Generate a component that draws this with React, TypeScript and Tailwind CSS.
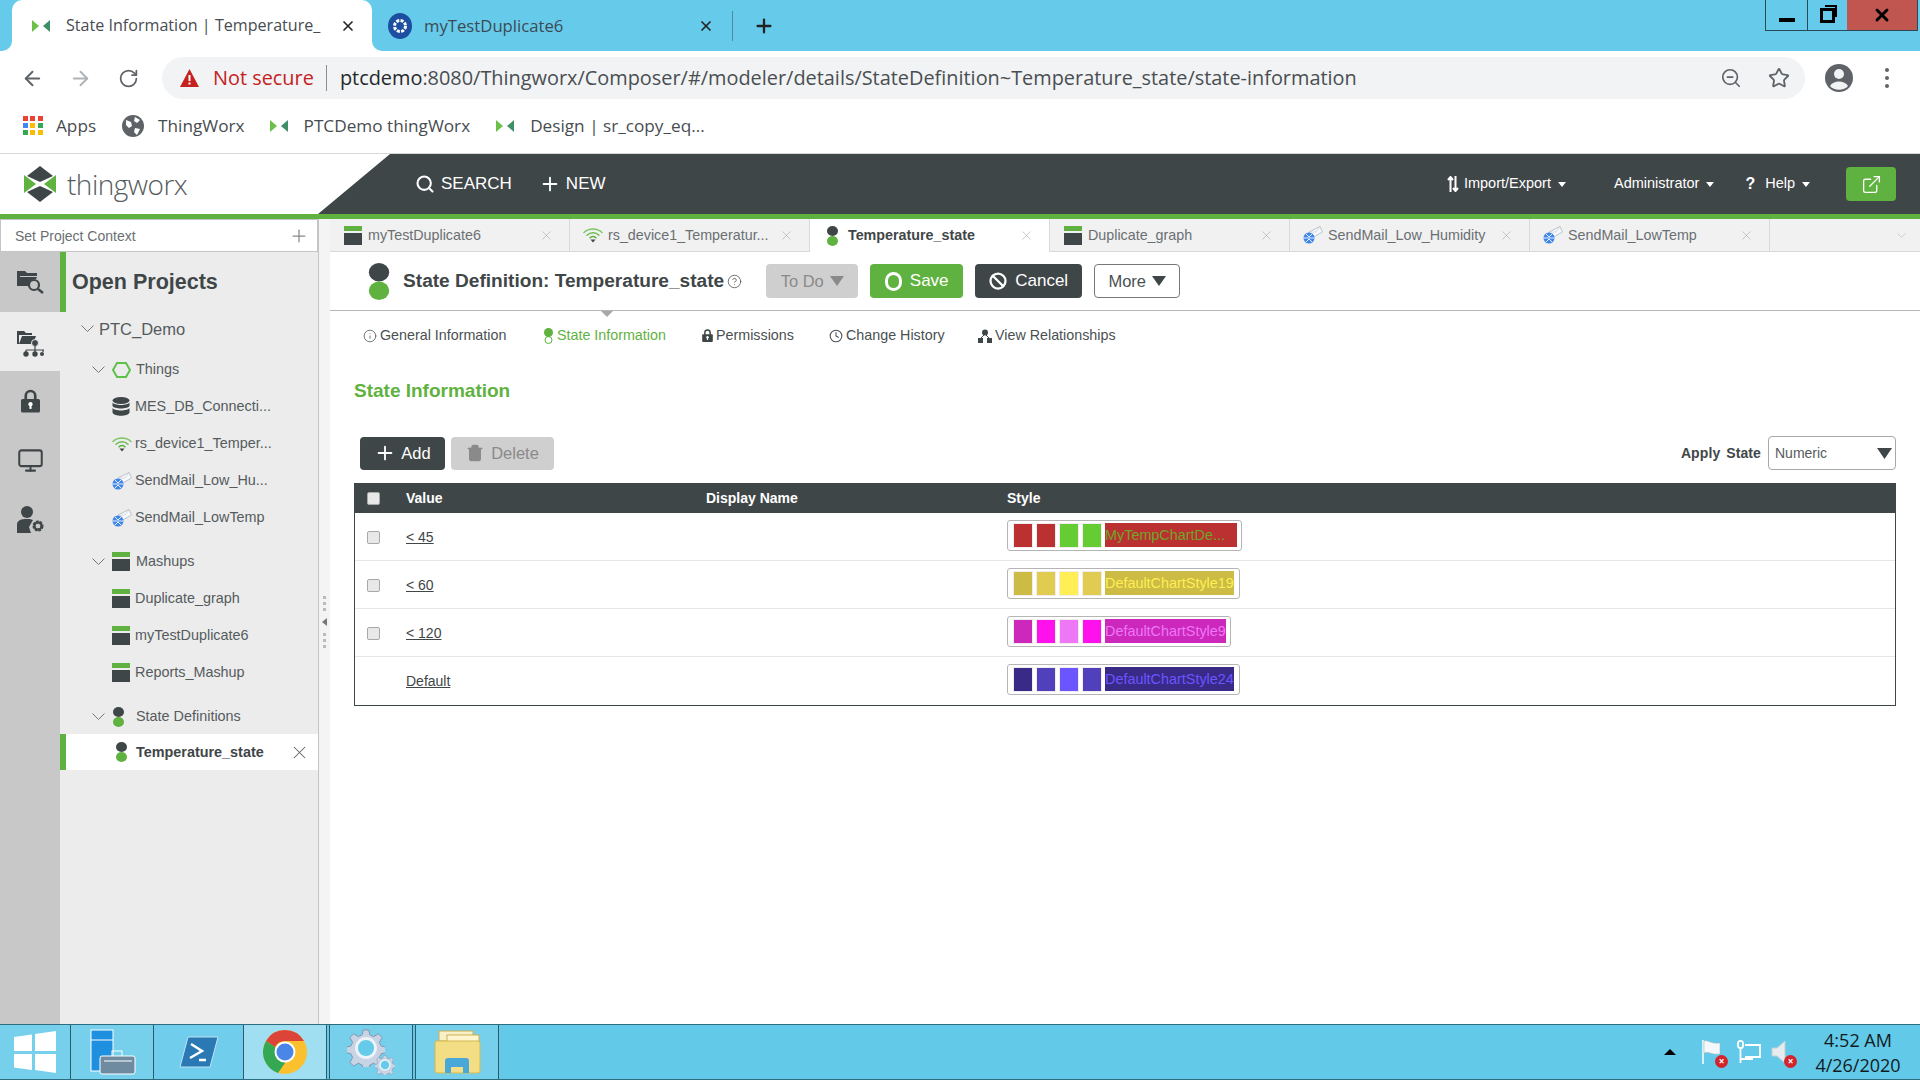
import { type FC, type ReactNode } from 'react';
import { ArrowLeft, ArrowRight, RotateCw, ZoomOut, Star, Search, Plus, Monitor, Info, Clock, Ban, Trash2, ExternalLink, X, ChevronDown, CircleHelp } from 'lucide-react';

const TwxTabIcon: FC = () => (
  <svg width="20" height="14" viewBox="0 0 20 14" className="shrink-0">
    <polygon points="1,1 8,7 1,13" fill="#6cc04a" />
    <polygon points="19,1 12,7 19,13" fill="#3f8f6a" />
  </svg>
);

const MashupIcon: FC<{ w?: number }> = ({ w = 18 }) => (
  <svg width={w} height="19" viewBox="0 0 18 19" preserveAspectRatio="none" className="shrink-0">
    <rect width="18" height="5" fill="#5fb23f" />
    <rect y="7" width="18" height="12" fill="#3f4648" />
  </svg>
);

const StateIcon: FC<{ size?: number }> = ({ size = 20 }) => (
  <svg width={size * 0.65} height={size} viewBox="0 0 13 20" className="shrink-0">
    <ellipse cx="6.500" cy="5" rx="5.500" ry="5" fill="#3f4648" />
    <ellipse cx="6.500" cy="15" rx="5.500" ry="5" fill="#5fb23f" />
  </svg>
);

const WifiIcon: FC = () => (
  <svg width="20" height="16" viewBox="0 0 20 16" fill="none" strokeLinecap="round" className="shrink-0">
    <path d="M1 5.500C6 .8 14 .8 19 5.500" stroke="#7cc763" strokeWidth="1.500" />
    <path d="M4 8.200C7.500 5 12.500 5 16 8.200" stroke="#6cbd50" strokeWidth="1.500" />
    <path d="M7 10.800C8.700 9.400 11.300 9.400 13 10.800" stroke="#5fb23f" strokeWidth="1.500" />
    <path d="M7.500 12.500h5L10 15.500z" fill="#3f4648" />
  </svg>
);

const SoapIcon: FC = () => (
  <svg width="20" height="18" viewBox="0 0 20 18" className="shrink-0">
    <polygon points="6,6 17,0.500 19.500,6 9,12" fill="#f6f8fb" stroke="#aeb6c2" strokeWidth="0.800" />
    <path d="M6.500 6.200L13 6l4-5.300" stroke="#c2c9d3" strokeWidth="0.600" fill="none" />
    <circle cx="6" cy="12" r="5.500" fill="#3f86e6" />
    <path d="M.5 12h11M3 8l3 3 3-3M3 16l3-3 3 3" stroke="#e4f0ff" strokeWidth="1" fill="none" />
  </svg>
);

const DbIcon: FC = () => (
  <svg width="18" height="20" viewBox="0 0 18 20" className="shrink-0">
    <ellipse cx="9" cy="3.500" rx="8.500" ry="3.500" fill="#3f4648" />
    <path d="M.5 5.500C2 8.800 16 8.800 17.500 5.500V9C16 12.300 2 12.300.5 9z" fill="#3f4648" />
    <path d="M.5 11C2 14.300 16 14.300 17.500 11v4.500C16 19.800 2 19.800.5 15.500z" fill="#3f4648" />
  </svg>
);

const HexIcon: FC = () => (
  <svg width="19" height="16" viewBox="0 0 19 16" fill="none" className="shrink-0">
    <polygon points="5,1 14,1 18,8 14,15 5,15 1,8" stroke="#5fc04a" strokeWidth="2" />
  </svg>
);

const PadLock: FC<{ w: number; h: number }> = ({ w, h }) => (
  <svg width={w} height={h} viewBox="0 0 18 22" className="shrink-0">
    <path d="M4.500 10V6a4.500 4.500 0 0 1 9 0v4" fill="none" stroke="#3f4648" strokeWidth="2.500" />
    <rect y="9" width="18" height="13" rx="1.500" fill="#3f4648" />
    <circle cx="9" cy="14" r="2" fill="#fff" />
    <rect x="8" y="14" width="2" height="4.500" fill="#fff" />
  </svg>
);

const Chevron: FC = () => (
  <svg width="13" height="8" viewBox="0 0 13 8" fill="none" stroke="#777" strokeWidth="1" className="shrink-0">
    <path d="M.5 .5l6 6 6-6" />
  </svg>
);

const Caret: FC<{ w?: number; h?: number; color?: string }> = ({ w = 13, h = 9, color = '#3f4648' }) => (
  <svg width={w} height={h} viewBox="0 0 13 9" preserveAspectRatio="none" className="shrink-0">
    <polygon points="0,0 13,0 6.500,9" fill={color} />
  </svg>
);

const TreeRow: FC<{ indent: string; icon: ReactNode; label: string; chevron?: boolean }> = ({ indent, icon, label, chevron }) => (
  <div className={`h-[37px] flex items-center text-[14.400px] text-[#555b5d] ${indent}`}>
    {chevron && <span className="w-[20px] shrink-0"><Chevron /></span>}
    <span className={`${chevron ? 'w-[24px]' : 'w-[23px]'} shrink-0 flex items-center`}>{icon}</span>
    <span className="whitespace-nowrap">{label}</span>
  </div>
);

const AppTab: FC<{ icon: ReactNode; label: string; active?: boolean }> = ({ icon, label, active }) => (
  <div className={`w-[240px] flex items-center pl-[13px] pr-[15px] gap-[6px] text-[14.300px] border-r border-[#d9d9d9] ${active ? 'bg-white font-bold text-[#3f4648]' : 'bg-[#f1f1f1] text-[#6a6f71] border-b'}`}>
    <span className="flex justify-center w-[19px]">{icon}</span>
    <span className="flex-1 whitespace-nowrap pt-[1px]">{label}</span>
    <X size={15} strokeWidth={1} color="#aaa" />
  </div>
);

const SubTab: FC<{ icon: ReactNode; label: string; active?: boolean; width: string }> = ({ icon, label, active, width }) => (
  <div className={`flex items-center gap-[3px] text-[14.300px] ${width} ${active ? 'text-[#5fb23f]' : 'text-[#4a5052]'}`}>
    {icon}
    <span className="whitespace-nowrap">{label}</span>
  </div>
);

const StyleCell: FC<{ swatches: string[]; label: string; bg: string; fg: string; w: string; labelW: string }> = ({ swatches, label, bg, fg, w, labelW }) => (
  <div className={`h-[31px] mb-[3px] border border-[#b5b5b5] rounded-[3px] bg-white flex items-center pl-[5px] ${w}`}>
    {swatches.map((c, i) => (
      <span key={i} className="w-[20px] h-[25px] flex items-center justify-center mr-[3px] border border-[#f3ecec]">
        <span className="block w-[18px] h-[23px]" style={{ backgroundColor: c }} />
      </span>
    ))}
    <span className={`h-[24px] text-[14.400px] leading-[24px] whitespace-nowrap ${labelW}`} style={{ backgroundColor: bg, color: fg }}>{label}</span>
  </div>
);

const rows = [
  { value: '< 45', check: true, cell: <StyleCell w="w-[235px]" labelW="w-[132px]" swatches={['#bb3030', '#bb3030', '#66cc33', '#66cc33']} label="MyTempChartDe..." bg="#bb3030" fg="#6ea62a" /> },
  { value: '< 60', check: true, cell: <StyleCell w="w-[233px]" labelW="w-[129px]" swatches={['#ccbb44', '#e0cc50', '#ffee55', '#e0cc50']} label="DefaultChartStyle19" bg="#ccbb44" fg="#ffee55" /> },
  { value: '< 120', check: true, cell: <StyleCell w="w-[224px]" labelW="w-[121px]" swatches={['#cc28bb', '#ff11ee', '#ee77f5', '#ff11ee']} label="DefaultChartStyle9" bg="#cc28bb" fg="#ee77f5" /> },
  { value: 'Default', check: false, cell: <StyleCell w="w-[233px]" labelW="w-[129px]" swatches={['#3a2a88', '#5040bb', '#6a55ff', '#5040bb']} label="DefaultChartStyle24" bg="#3a2a88" fg="#6a55ff" /> },
];

const Checkbox: FC = () => (
  <span className="block w-[13px] h-[13px] rounded-[2px] bg-[#e8e8e8] border border-[#a8a8a8]" />
);

const ChromeIcon: FC = () => (
  <svg width="44" height="44" viewBox="0 0 44 44">
    <circle cx="22" cy="22" r="22" fill="#fbc02d" />
    <path d="M22 0A22 22 0 0 1 41 11H22A11 11 0 0 0 12 17L3 11A22 22 0 0 1 22 0z" fill="#db4437" />
    <path d="M3 11L12 17 22 33 15 43A22 22 0 0 1 3 11z" fill="#34a853" />
    <circle cx="22" cy="22" r="10.500" fill="#fff" />
    <circle cx="22" cy="22" r="8.500" fill="#4a86e8" />
  </svg>
);

const TrayBadge: FC = () => (
  <span className="absolute -right-[4px] -bottom-[4px] w-[13px] h-[13px] rounded-full bg-[#d4242b] text-white text-[10px] font-bold leading-[13px] text-center">×</span>
);

const Gear: FC<{ size: number; className?: string }> = ({ size, className }) => (
  <svg width={size} height={size} viewBox="0 0 40 40" className={className}>
    <path d="M17 1h6l1 5 4 2 5-3 4 4-3 5 2 4 5 1v6l-5 1-2 4 3 5-4 4-5-3-4 2-1 5h-6l-1-5-4-2-5 3-4-4 3-5-2-4-5-1v-6l5-1 2-4-3-5 4-4 5 3 4-2z" fill="#c8d4e4" stroke="#7f93ad" strokeWidth="1" />
    <circle cx="20" cy="20" r="10" fill="#66cbea" stroke="#eef3f8" strokeWidth="3" />
  </svg>
);

export default function App() {
  return (
    <div className="w-[1920px] h-[1080px] flex flex-col overflow-hidden bg-white font-['Liberation_Sans',Arial,sans-serif]">
      {/* browser tab strip */}
      <div className="h-[51px] shrink-0 flex bg-[#66cbea] font-['Open_Sans',sans-serif] relative">
        <div className="w-[12px] bg-white"><div className="h-full bg-[#66cbea] rounded-br-[10px]" /></div>
        <div className="w-[360px] bg-white rounded-t-[10px] flex items-center pl-[19px] pr-[16px] text-[16.100px] text-[#474c50]">
          <TwxTabIcon />
          <span className="ml-[15px] whitespace-nowrap">State Information | Temperature_</span>
          <div className="flex-1" />
          <X size={16} strokeWidth={2.500} color="#222" className="shrink-0" />
        </div>
        <div className="w-[358px] bg-white"><div className="h-full bg-[#66cbea] rounded-bl-[10px] flex items-center pl-[16px] pr-[16px] text-[16.700px] text-[#3d4a55]">
          <svg width="24" height="26" viewBox="0 0 24 26" className="shrink-0">
            <ellipse cx="12" cy="13" rx="12" ry="13" fill="#1d4fa0" />
            <circle cx="12" cy="13" r="5.500" fill="none" stroke="#fff" strokeWidth="3" strokeDasharray="3 1.300" />
          </svg>
          <span className="ml-[12px] flex-1 whitespace-nowrap">myTestDuplicate6</span>
          <X size={16} strokeWidth={2.500} color="#222" />
        </div></div>
        <div className="w-px h-[30px] bg-[#4f8aa0] self-center ml-[2px]" />
        <Plus size={22} strokeWidth={2.500} color="#222" className="self-center ml-[20px]" />
        <div className="flex-1" />
        <div className="h-[31px] flex border border-t-0 border-[#2a4a58] self-start mr-[2px]">
          <div className="w-[42px] border-r border-[#2a4a58] flex items-end justify-center pb-[8px]"><span className="block w-[16px] h-[4px] bg-black" /></div>
          <div className="w-[39px] flex items-center justify-center">
            <span className="relative block w-[15px] h-[15px] border-[3px] border-black"><span className="absolute -top-[6px] left-[2px] w-[12px] h-[12px] border-t-[2px] border-r-[2px] border-black" /></span>
          </div>
          <div className="w-[70px] bg-[#c0564f] flex items-center justify-center"><X size={20} strokeWidth={3.500} color="#000" /></div>
        </div>
      </div>

      {/* browser toolbar */}
      <div className="h-[54px] shrink-0 flex items-center font-['Open_Sans',sans-serif]">
        <ArrowLeft size={23} strokeWidth={2} color="#5f6368" className="ml-[21px]" />
        <ArrowRight size={23} strokeWidth={2} color="#b0b3b6" className="ml-[25px]" />
        <RotateCw size={21} strokeWidth={2} color="#5f6368" className="ml-[26px]" />
        <div className="ml-[23px] w-[1643px] h-[42px] rounded-full bg-[#f1f3f4] flex items-center pl-[18px] pr-[15px] text-[19.900px] text-[#4a4e52]">
          <svg width="19" height="18" viewBox="0 0 19 18" className="shrink-0"><polygon points="9.500,0 19,18 0,18" fill="#c5221f" /><rect x="8.500" y="6" width="2" height="6" fill="#fff" /><rect x="8.500" y="13.500" width="2" height="2" fill="#fff" /></svg>
          <span className="ml-[14px] text-[#c5221f]">Not secure</span>
          <span className="w-px h-[26px] bg-[#8a8d90] ml-[12px] mr-[13px]" />
          <span className="flex-1 whitespace-nowrap"><span className="text-[#26292c]">ptcdemo</span>:8080/Thingworx/Composer/#/modeler/details/StateDefinition~Temperature_state/state-information</span>
          <ZoomOut size={22} strokeWidth={1.800} color="#5f6368" className="mr-[26px]" />
          <Star size={22} strokeWidth={2} color="#5f6368" />
        </div>
        <svg width="30" height="30" viewBox="0 0 30 30" className="ml-[19px]"><circle cx="15" cy="15" r="14" fill="#5f6368" /><circle cx="15" cy="11" r="5" fill="#f1f3f4" /><path d="M6 23c3-6 15-6 18 0-4 5-14 5-18 0z" fill="#f1f3f4" /></svg>
        <div className="ml-[31px] flex flex-col gap-[4px]">
          <span className="block w-[4px] h-[4px] rounded-full bg-[#5f6368]" />
          <span className="block w-[4px] h-[4px] rounded-full bg-[#5f6368]" />
          <span className="block w-[4px] h-[4px] rounded-full bg-[#5f6368]" />
        </div>
      </div>

      {/* bookmarks */}
      <div className="h-[49px] shrink-0 border-b border-[#d8d8d8] flex items-center pl-[23px] pb-[7px] text-[17.200px] text-[#474c50] font-['Open_Sans',sans-serif]">
        <div className="grid grid-cols-3 gap-[2px] w-[20px] shrink-0">
          {['#ea4335', '#ea4335', '#ea4335', '#4285f4', '#fbbc04', '#34a853', '#34a853', '#fbbc04', '#fbbc04'].map((c, i) => (
            <span key={i} className="block w-[5px] h-[5px]" style={{ backgroundColor: c }} />
          ))}
        </div>
        <span className="ml-[13px]">Apps</span>
        <svg width="22" height="22" viewBox="0 0 22 22" className="ml-[26px] shrink-0"><circle cx="11" cy="11" r="11" fill="#5f6368" /><path d="M4 5l5 2 1 4-3 2-3-3zM13 2l5 3-3 3-3-2zM13 13l5 1-3 6-3-3z" fill="#fff" /></svg>
        <span className="ml-[14px]">ThingWorx</span>
        <span className="ml-[24px]"><TwxTabIcon /></span>
        <span className="ml-[15px]">PTCDemo thingWorx</span>
        <span className="ml-[25px]"><TwxTabIcon /></span>
        <span className="ml-[15px]">Design | sr_copy_eq...</span>
      </div>

      {/* thingworx header */}
      <div className="h-[60px] shrink-0 flex">
        <div className="w-[318px] flex items-center pl-[24px] bg-white">
          <svg width="32" height="36" viewBox="0 0 32 36">
            <polygon points="16,0 29,10 16,16 3,10" fill="#3f4648" />
            <polygon points="16,36 29,26 16,20 3,26" fill="#3f4648" />
            <polygon points="0,9 12,18 0,27" fill="#5fb23f" />
            <polygon points="32,9 20,18 32,27" fill="#5fb23f" />
          </svg>
          <span className="ml-[11px] text-[28px] font-light text-[#565c5e] font-['Open_Sans',sans-serif] tracking-[-0.500px]">thingworx</span>
        </div>
        <svg width="72" height="60" viewBox="0 0 72 60" className="shrink-0"><polygon points="72,0 72,60 0,60" fill="#3f4648" /></svg>
        <div className="flex-1 bg-[#3f4648] flex items-center text-white">
          <Search size={20} strokeWidth={2.500} className="ml-[25px]" />
          <span className="ml-[6px] text-[17px]">SEARCH</span>
          <Plus size={22} strokeWidth={2} className="ml-[27px]" />
          <span className="ml-[5px] text-[17px]">NEW</span>
          <div className="flex-1" />
          <svg width="12" height="16" viewBox="0 0 12 16" fill="none" stroke="#fff" strokeWidth="2"><path d="M3.500 16V2M1 4l2.500-3L6 4M8.500 0v14M6 12l2.500 3 2.500-3" /></svg>
          <span className="ml-[5px] text-[14.500px]">Import/Export</span>
          <span className="ml-[7px]"><Caret w={8} h={5} color="#fff" /></span>
          <span className="ml-[48px] text-[14.500px]">Administrator</span>
          <span className="ml-[7px]"><Caret w={8} h={5} color="#fff" /></span>
          <span className="ml-[31px] text-[16px] font-bold">?</span>
          <span className="ml-[10px] text-[14.500px]">Help</span>
          <span className="ml-[7px]"><Caret w={8} h={5} color="#fff" /></span>
          <div className="ml-[36px] mr-[24px] w-[50px] h-[34px] rounded-[4px] bg-[#5fb23f] flex items-center justify-center">
            <ExternalLink size={21} strokeWidth={1.500} color="#fff" />
          </div>
        </div>
      </div>
      <div className="h-[5px] shrink-0 bg-[#5fb23f]" />

      {/* main area */}
      <div className="flex-1 min-h-0 flex">
        <div className="w-[319px] shrink-0 flex flex-col border-r border-[#c4c4c4]">
          <div className="h-[33px] shrink-0 bg-white border border-[#c4c4c4] flex items-center pl-[14px] pr-[8px] text-[14px] text-[#6a6f71]">
            <span className="flex-1 pt-[1px]">Set Project Context</span>
            <Plus size={20} strokeWidth={1.500} color="#888" />
          </div>
          <div className="flex-1 flex min-h-0">
            <div className="w-[60px] bg-[#c8c8c8] flex flex-col">
              <div className="h-[60px] flex items-center justify-center relative pb-[2px]">
                <svg width="27" height="25" viewBox="0 0 27 25">
                  <path d="M0 2h8l2 2h10v3H3v9H0z" fill="#3f4648" /><path d="M0 8h20l-1 2a7 7 0 0 0-7 7H0z" fill="#3f4648" />
                  <circle cx="17" cy="16" r="5" fill="none" stroke="#3f4648" strokeWidth="2.200" /><path d="M21 20l5 4" stroke="#3f4648" strokeWidth="2.500" />
                </svg>
              </div>
              <div className="h-[59px] bg-[#ececec] flex items-center justify-center pt-[3px]">
                <svg width="27" height="27" viewBox="0 0 27 27">
                  <path d="M0 1h7l2 2h6v2H2v9H0z" fill="#3f4648" /><path d="M2 14L5 6h14l-3 8z" fill="#3f4648" />
                  <circle cx="18" cy="13" r="3.500" fill="#3f4648" stroke="#ececec" /><path d="M18 15v4M9 20h18M9 20v2M18 19v3M26 20v2" stroke="#3f4648" strokeWidth="1.200" fill="none" />
                  <circle cx="9" cy="24" r="2.700" fill="#3f4648" /><circle cx="18" cy="24" r="2.700" fill="#3f4648" /><circle cx="25" cy="24" r="2" fill="#3f4648" />
                </svg>
              </div>
              <div className="h-[60px] flex items-center justify-center"><PadLock w={19} h={24} /></div>
              <div className="h-[60px] flex items-center justify-center pb-[2px]"><Monitor size={27} strokeWidth={1.800} color="#3f4648" /></div>
              <div className="h-[60px] flex items-center justify-center pb-[3px]">
                <svg width="27" height="27" viewBox="0 0 27 27">
                  <circle cx="10" cy="6" r="6" fill="#3f4648" /><path d="M0 27V19c0-5 4-6 10-6 3 0 5 .5 6 1l-4 7 2 6z" fill="#3f4648" />
                  <circle cx="21" cy="20" r="4" fill="none" stroke="#3f4648" strokeWidth="3" strokeDasharray="2.500 .8" /><circle cx="21" cy="20" r="3.500" fill="none" stroke="#3f4648" strokeWidth="2" />
                </svg>
              </div>
            </div>
            <div className="flex-1 bg-[#ececec] flex flex-col relative">
              <div className="h-[60px] shrink-0 flex items-center border-l-[6px] border-[#5fb23f] pl-[6px] pt-[1px] text-[21.500px] font-bold text-[#3f4648]">Open Projects</div>
              <div className="h-[34px] shrink-0 flex items-center pl-[21px] text-[16.500px] text-[#555b5d]">
                <span className="w-[18px]"><Chevron /></span>PTC_Demo
              </div>
              <TreeRow indent="pl-[32px] mt-[5px]" chevron icon={<HexIcon />} label="Things" />
              <TreeRow indent="pl-[52px]" icon={<DbIcon />} label="MES_DB_Connecti..." />
              <TreeRow indent="pl-[52px]" icon={<WifiIcon />} label="rs_device1_Temper..." />
              <TreeRow indent="pl-[52px]" icon={<SoapIcon />} label="SendMail_Low_Hu..." />
              <TreeRow indent="pl-[52px]" icon={<SoapIcon />} label="SendMail_LowTemp" />
              <TreeRow indent="pl-[32px] mt-[7px]" chevron icon={<MashupIcon />} label="Mashups" />
              <TreeRow indent="pl-[52px]" icon={<MashupIcon />} label="Duplicate_graph" />
              <TreeRow indent="pl-[52px]" icon={<MashupIcon />} label="myTestDuplicate6" />
              <TreeRow indent="pl-[52px]" icon={<MashupIcon />} label="Reports_Mashup" />
              <TreeRow indent="pl-[32px] mt-[7px]" chevron icon={<StateIcon />} label="State Definitions" />
              <div className="h-[36px] -mt-px flex items-center bg-white border-l-[6px] border-[#5fb23f] pl-[49px] pr-[8px] text-[14.400px] font-bold text-[#3f4648]">
                <span className="w-[20px]"><StateIcon /></span>
                <span className="ml-[1px] flex-1 pt-[2px]">Temperature_state</span>
                <X size={21} strokeWidth={1.200} color="#666" />
              </div>
            </div>
          </div>
        </div>

        {/* splitter */}
        <div className="w-[11px] shrink-0 bg-[#f4f4f4] flex flex-col items-center justify-center gap-[3px]">
          <span className="w-[3px] h-[3px] bg-[#bbb]" /><span className="w-[3px] h-[3px] bg-[#bbb]" /><span className="w-[3px] h-[3px] bg-[#bbb]" />
          <span className="w-0 h-0 my-[4px] border-y-[4px] border-y-transparent border-r-[5px] border-r-[#777]" />
          <span className="w-[3px] h-[3px] bg-[#bbb]" /><span className="w-[3px] h-[3px] bg-[#bbb]" /><span className="w-[3px] h-[3px] bg-[#bbb]" />
        </div>

        <div className="flex-1 min-w-0 flex flex-col">
          {/* open entity tabs */}
          <div className="h-[33px] shrink-0 flex bg-[#f1f1f1]">
            <AppTab icon={<MashupIcon />} label="myTestDuplicate6" />
            <AppTab icon={<WifiIcon />} label="rs_device1_Temperatur..." />
            <AppTab active icon={<StateIcon />} label="Temperature_state" />
            <AppTab icon={<MashupIcon />} label="Duplicate_graph" />
            <AppTab icon={<SoapIcon />} label="SendMail_Low_Humidity" />
            <AppTab icon={<SoapIcon />} label="SendMail_LowTemp" />
            <div className="flex-1 border-b border-[#d9d9d9] flex items-center justify-end pr-[11px]"><ChevronDown size={15} strokeWidth={1} color="#bbb" /></div>
          </div>

          {/* title bar */}
          <div className="h-[59px] shrink-0 border-b border-[#b5b5b5] flex items-center pl-[37px] relative">
            <StateIcon size={37} />
            <span className="ml-[12px] text-[19.100px] font-bold text-[#3f4648] whitespace-nowrap">State Definition: Temperature_state</span>
            <CircleHelp size={15} strokeWidth={1.300} color="#555" className="ml-[3px]" />
            <div className="ml-[24px] w-[92px] h-[34px] rounded-[4px] bg-[#cfcfcf] flex items-center justify-center gap-[6px] text-[16.500px] text-[#8a8a8a]">To Do <Caret color="#8a8a8a" w={14} h={10} /></div>
            <div className="ml-[12px] w-[93px] h-[34px] rounded-[4px] bg-[#5fb23f] flex items-center justify-center gap-[8px] text-[17px] text-white">
              <span className="block w-[17px] h-[19px] rounded-full border-[3px] border-white" />Save
            </div>
            <div className="ml-[12px] w-[107px] h-[34px] rounded-[4px] bg-[#3f4648] flex items-center justify-center gap-[8px] text-[17px] text-white">
              <Ban size={18} strokeWidth={3} />Cancel
            </div>
            <div className="ml-[12px] w-[86px] h-[34px] rounded-[4px] border border-[#777] flex items-center justify-center gap-[6px] text-[16.500px] text-[#4a5052]">More <Caret w={14} h={10} /></div>
            <span className="absolute left-[271px] -bottom-[7px] w-0 h-0 border-x-[6px] border-x-transparent border-t-[6px] border-t-[#a8a8a8]" />
          </div>

          {/* sub navigation */}
          <div className="h-[49px] shrink-0 flex items-center pl-[33px]">
            <SubTab width="w-[180px]" icon={<Info size={14} strokeWidth={1.300} />} label="General Information" />
            <SubTab width="w-[159px]" active icon={<svg width="11" height="16" viewBox="0 0 11 16" className="shrink-0"><ellipse cx="5.500" cy="4.500" rx="4.500" ry="4.500" fill="#5fb23f" /><ellipse cx="5.500" cy="12" rx="3.500" ry="3.500" fill="none" stroke="#5fb23f" /></svg>} label="State Information" />
            <SubTab width="w-[127px]" icon={<PadLock w={11} h={13} />} label="Permissions" />
            <SubTab width="w-[149px]" icon={<Clock size={14} strokeWidth={1.800} />} label="Change History" />
            <SubTab width="w-[140px]" icon={<svg width="14" height="14" viewBox="0 0 14 14" fill="#3f4648"><circle cx="7" cy="3.500" r="3" /><rect y="9" width="5" height="5" /><rect x="9" y="9" width="5" height="5" /><path d="M6 6L3 9M8 6l3 3" stroke="#3f4648" /></svg>} label="View Relationships" />
          </div>

          <div className="flex-1 px-[24px] flex flex-col">
            <div className="mt-[19px] h-[24px] text-[19px] leading-[24px] font-bold text-[#5fb23f]">State Information</div>
            <div className="mt-[33px] h-[34px] flex items-center pl-[6px]">
              <div className="w-[85px] h-[33px] rounded-[4px] bg-[#3f4648] flex items-center justify-center gap-[5px] text-[16.500px] text-white"><Plus size={22} strokeWidth={2} />Add</div>
              <div className="ml-[6px] w-[103px] h-[33px] rounded-[4px] bg-[#cfcfcf] flex items-center justify-center gap-[7px] text-[16.500px] text-[#8a8a8a]"><Trash2 size={18} strokeWidth={2} fill="#8a8a8a" />Delete</div>
              <div className="flex-1" />
              <span className="text-[14px] font-bold text-[#3f4648] tracking-[0.100px] [word-spacing:2px]">Apply State</span>
              <div className="ml-[7px] w-[128px] h-[34px] rounded-[4px] border border-[#a8a8a8] flex items-center pl-[6px] pr-[3px] text-[14px] text-[#555b5d]">
                <span className="flex-1">Numeric</span><Caret w={15} h={11} />
              </div>
            </div>

            <div className="mt-[13px] border-x border-b border-[#3f4648]">
              <div className="h-[30px] bg-[#3f4648] -mx-px grid grid-cols-[52px_300px_301px_1fr] items-center text-[14px] font-bold text-white">
                <span className="pl-[13px]"><Checkbox /></span>
                <span>Value</span>
                <span>Display Name</span>
                <span>Style</span>
              </div>
              {rows.map((r, i) => (
                <div key={r.value} className={`h-[48px] grid grid-cols-[51px_300px_301px_1fr] items-center text-[14px] text-[#3f4648] border-b ${i < rows.length - 1 ? 'border-[#e6e6e6]' : 'border-transparent'}`}>
                  <span className="pl-[12px] mt-[2px]">{r.check && <Checkbox />}</span>
                  <span className="underline mt-[2px]">{r.value}</span>
                  <span />
                  {r.cell}
                </div>
              ))}
            </div>
          </div>
        </div>
      </div>

      {/* windows taskbar */}
      <div className="h-[56px] shrink-0 bg-[#63c9e9] border-y border-[#2e6c80] flex items-stretch font-['Open_Sans',sans-serif]">
        <div className="w-[71px] border-r border-[#2e5a6c] bg-[#76d0ec] flex items-center justify-center">
          <svg width="44" height="44" viewBox="0 0 44 44" fill="#fff"><polygon points="1,7 19,4.500 19,21 1,21" /><polygon points="22,4 43,1 43,21 22,21" /><polygon points="1,24 19,24 19,40 1,37.500" /><polygon points="22,24 43,24 43,43 22,40" /></svg>
        </div>
        <div className="w-[83px] border-r border-[#2e5a6c] bg-[#76d0ec] flex items-center justify-center">
          <svg width="48" height="46" viewBox="0 0 48 46">
            <rect x="3" y="1" width="22" height="41" fill="#1f8fdf" stroke="#fff" />
            <path d="M3 11h22" stroke="#fff" />
            <rect x="24" y="22" width="10" height="6" fill="none" stroke="#fff" />
            <rect x="12" y="27" width="35" height="18" rx="2" fill="#6f8ba0" stroke="#fff" />
            <path d="M16 32h28" stroke="#fff" />
          </svg>
        </div>
        <div className="w-[90px] border-r border-[#2e5a6c] bg-[#70cdeb] flex items-center justify-center">
          <svg width="40" height="32" viewBox="0 0 40 32"><polygon points="9,1 39,1 31,31 1,31" fill="#2a79b5" stroke="#bfe3f5" /><path d="M12 8l11 7-12 7" stroke="#fff" strokeWidth="2.500" fill="none" /><path d="M20 24h7" stroke="#fff" strokeWidth="2.500" /></svg>
        </div>
        <div className="w-[83px] border-r border-[#2e5a6c] bg-[#a0def2] flex items-center justify-center"><ChromeIcon /></div>
        <div className="w-[3px] border-r border-[#2e5a6c]" />
        <div className="w-[83px] border-r border-[#2e5a6c] bg-[#76d0ec] relative flex items-center justify-center">
          <Gear size={38} className="-mt-[8px] -ml-[10px]" />
          <Gear size={20} className="absolute right-[17px] bottom-[4px]" />
        </div>
        <div className="w-[3px] border-r border-[#2e5a6c]" />
        <div className="w-[83px] border-r border-[#2e5a6c] bg-[#76d0ec] flex items-center justify-center">
          <svg width="48" height="46" viewBox="0 0 48 46">
            <rect x="6" y="2" width="34" height="10" fill="#f8f1c8" stroke="#c9b052" />
            <rect x="14" y="6" width="32" height="10" fill="#fff6d0" stroke="#c9b052" />
            <rect x="2" y="12" width="45" height="32" rx="2" fill="#f3dd85" stroke="#d5b94f" />
            <path d="M12 44V32q0-3 3-3h18q3 0 3 3v12h-6v-6H18v6z" fill="#4aa8d8" />
          </svg>
        </div>
        <div className="flex-1" />
        <div className="flex items-center">
          <span className="w-0 h-0 border-x-[6px] border-x-transparent border-b-[6px] border-b-black" />
          <span className="relative ml-[26px] block w-[22px] h-[24px]">
            <svg width="22" height="24" viewBox="0 0 22 24"><path d="M1 0v24" stroke="#fff" strokeWidth="1.500" /><path d="M2 1c5-1 6 3 16 2v11c-9 1-11-3-16-1z" fill="#f4f8fa" stroke="#9fb0b8" strokeWidth=".500" /></svg>
            <TrayBadge />
          </span>
          <svg width="24" height="24" viewBox="0 0 24 24" fill="none" stroke="#fff" strokeWidth="1.800" className="ml-[13px]">
            <rect x="1" y="1" width="5" height="7" rx="2" /><path d="M3.500 8v15M8 5h15v12H8M3.500 19h12M15 17v3" />
          </svg>
          <span className="relative ml-[10px] block w-[22px] h-[24px]">
            <svg width="20" height="24" viewBox="0 0 20 24"><path d="M1 8h5l8-7v22l-8-7H1z" fill="#e6ebee" stroke="#c3ced4" /></svg>
            <TrayBadge />
          </span>
          <div className="w-[124px] ml-[3px] pt-[2px] flex flex-col items-center text-[18px] leading-[25px] text-[#111c22]">
            <span>4:52 AM</span>
            <span>4/26/2020</span>
          </div>
        </div>
      </div>
    </div>
  );
}
